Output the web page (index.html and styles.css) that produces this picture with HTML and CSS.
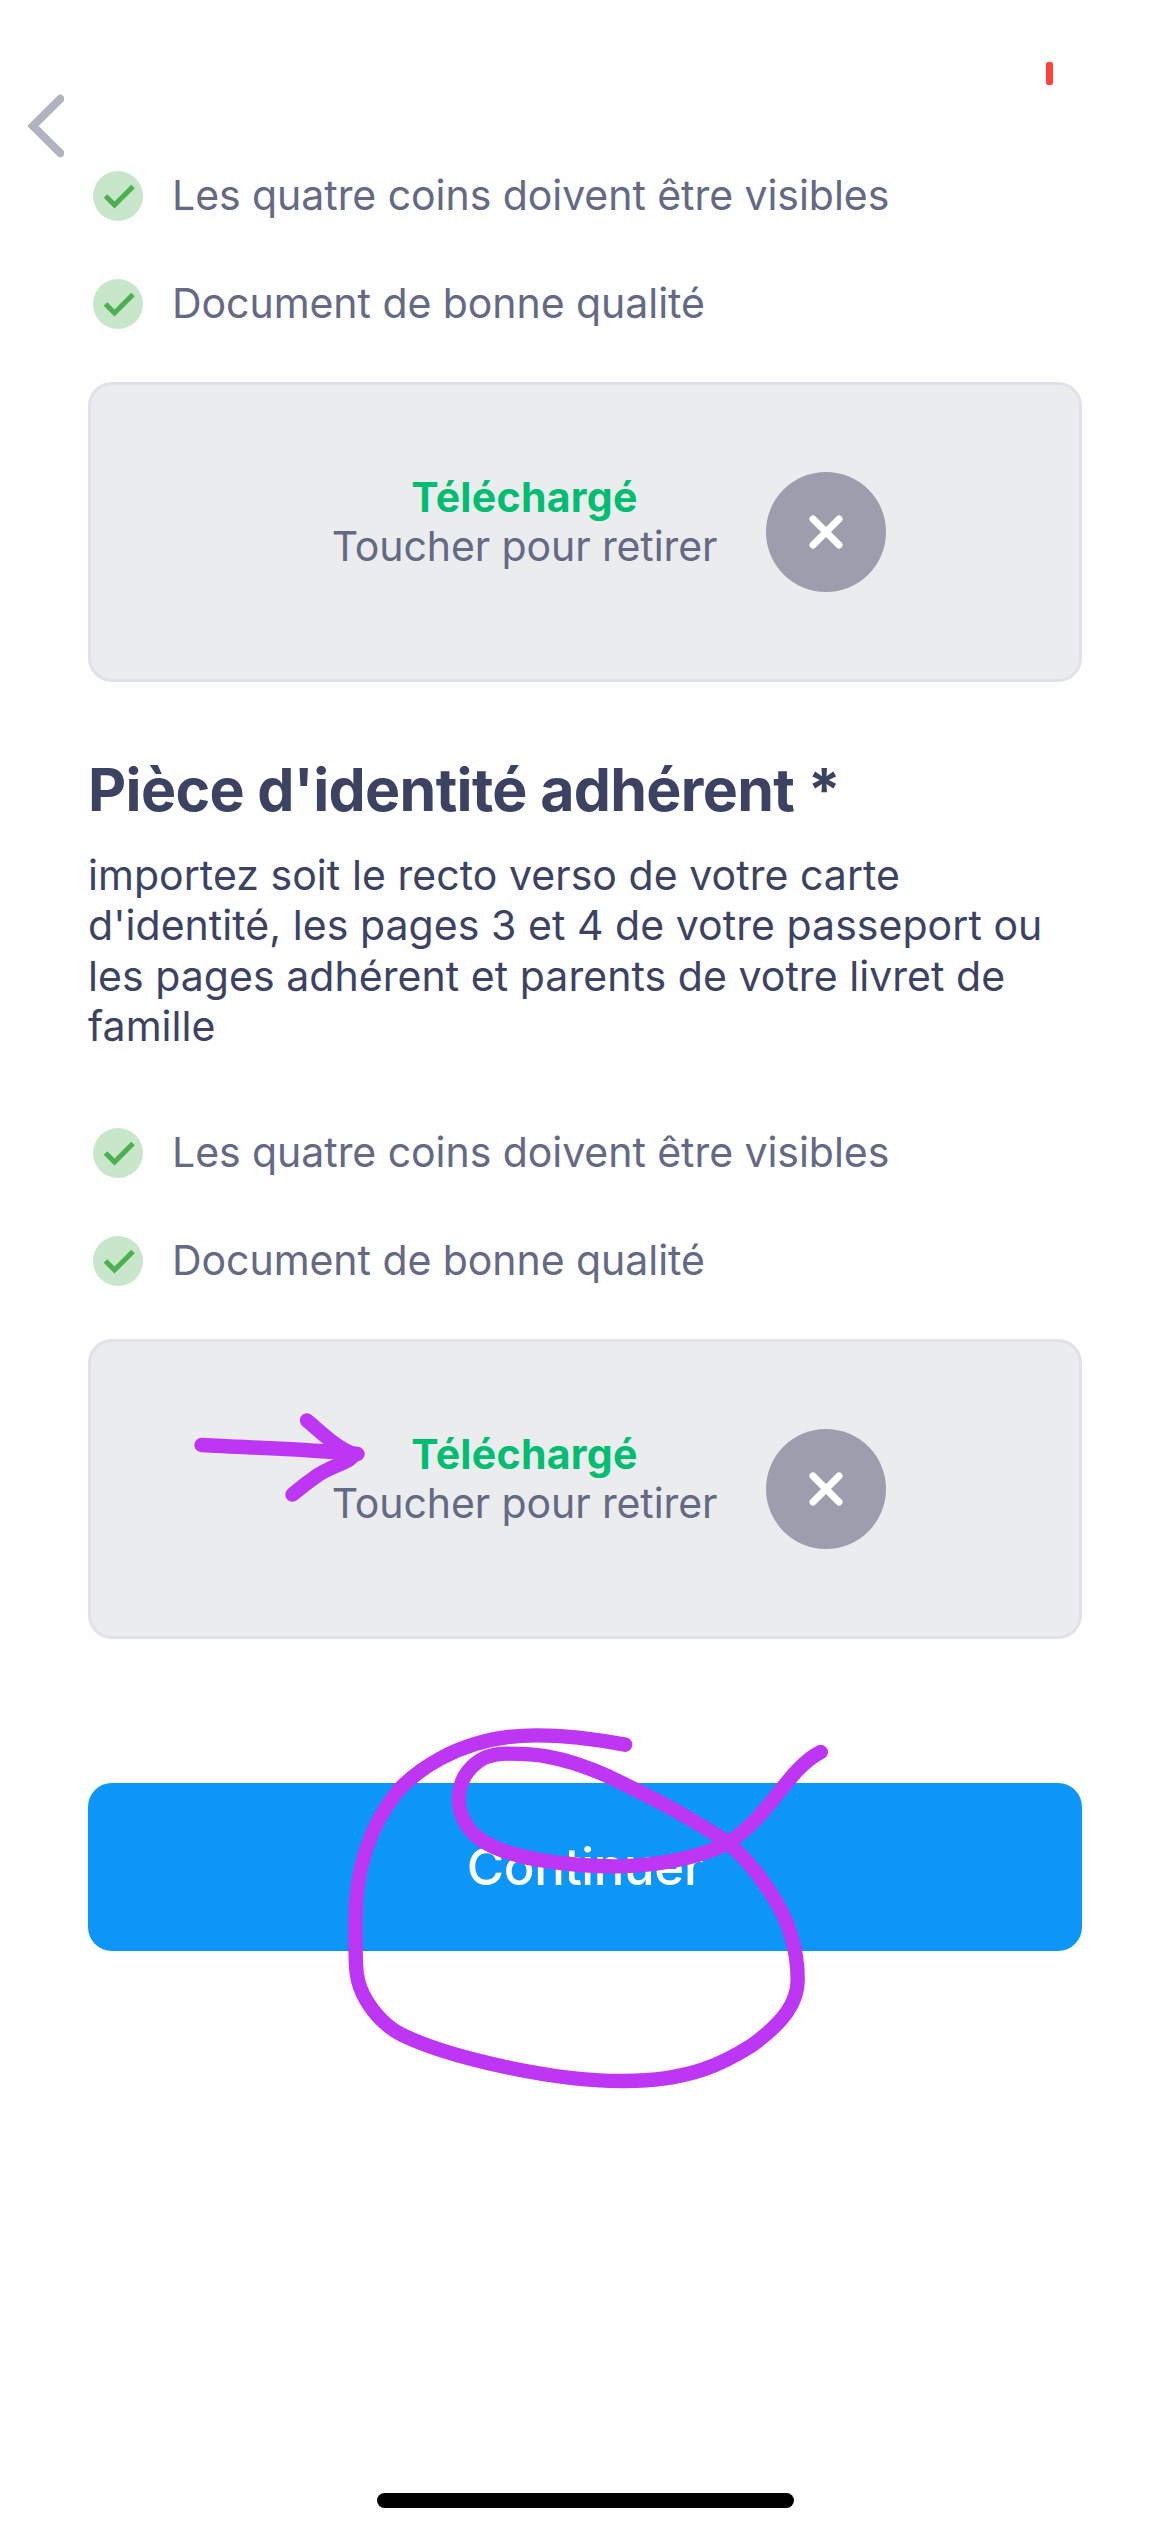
FILE: index.html
```html
<!DOCTYPE html>
<html lang="fr">
<head>
    <meta charset="UTF-8">
    <meta name="viewport" content="width=device-width, initial-scale=1.0">
    <title>Pièces justificatives</title>
    <link rel="stylesheet" href="styles.css">
</head>
<body>
    <!-- Back button and recording mark, above the scrolled content -->
    <button class="back-btn" aria-label="Retour">
        <svg width="36" height="64" viewBox="0 0 36 64"><path d="M32.3 4.8L5 32l27.3 27.2"/></svg>
    </button>
    <span class="rec-mark"></span>

    <main class="content">
        <ul class="checks">
            <li>
                <svg class="check" viewBox="0 0 50 50"><circle cx="25" cy="25" r="25"/><path d="M12.5 25l9 9L40 15.500"/></svg>
                <span class="check-text">Les quatre coins doivent être visibles</span>
            </li>
            <li>
                <svg class="check" viewBox="0 0 50 50"><circle cx="25" cy="25" r="25"/><path d="M12.5 25l9 9L40 15.500"/></svg>
                <span class="check-text">Document de bonne qualité</span>
            </li>
        </ul>

        <div class="upload">
            <div class="upload-text">
                <strong>Téléchargé</strong>
                <span>Toucher pour retirer</span>
            </div>
            <button class="remove-btn" aria-label="Retirer">
                <svg width="34" height="34" viewBox="0 0 34 34"><path d="M4 4l26 26M30 4L4 30"/></svg>
            </button>
        </div>

        <h2>Pièce d'identité adhérent *</h2>
        <p class="intro">importez soit le recto verso de votre carte d'identité, les pages 3 et 4 de votre passeport ou les pages adhérent et parents de votre livret de famille</p>

        <ul class="checks">
            <li>
                <svg class="check" viewBox="0 0 50 50"><circle cx="25" cy="25" r="25"/><path d="M12.5 25l9 9L40 15.500"/></svg>
                <span class="check-text">Les quatre coins doivent être visibles</span>
            </li>
            <li>
                <svg class="check" viewBox="0 0 50 50"><circle cx="25" cy="25" r="25"/><path d="M12.5 25l9 9L40 15.500"/></svg>
                <span class="check-text">Document de bonne qualité</span>
            </li>
        </ul>

        <div class="upload">
            <div class="upload-text">
                <strong>Téléchargé</strong>
                <span>Toucher pour retirer</span>
            </div>
            <button class="remove-btn" aria-label="Retirer">
                <svg width="34" height="34" viewBox="0 0 34 34"><path d="M4 4l26 26M30 4L4 30"/></svg>
            </button>
        </div>

        <button class="continue-btn">Continuer</button>
    </main>

    <!-- Hand-drawn marks -->
    <svg class="drawing" viewBox="0 0 1170 2532">
        <path d="M201.500 1445C255 1448 305 1449 357.500 1454"/>
        <path d="M307 1420.500C323 1434 338 1449 354 1454C350 1463 335 1464 318 1475Q305 1484 292.500 1494.500"/>
        <path class="loop" transform="translate(330 1700) scale(.3444 .33333)" d="M857 134C770 117 690 106 600 106C360 106 230 235 195 275C110 385 75 520 74 650C74 800 70 840 105 900C130 945 170 985 210 1005C340 1070 640 1144 850 1143C1050 1144 1150 1085 1225 1036C1320 965 1358 905 1358 840C1358 740 1325 650 1280 580C1240 515 1190 455 1140 418C1020 335 900 275 810 230C660 160 580 161 510 161C430 161 374 220 374 300C374 340 395 390 440 420C520 478 700 499 830 499C1000 497 1110 455 1160 425C1280 345 1330 205 1425 156"/>
    </svg>

    <div class="home-bar"></div>
</body>
</html>
```
FILE: styles.css
```css
* { margin: 0; padding: 0; box-sizing: border-box; }
body {
    font-family: Inter, "Liberation Sans", sans-serif;
    font-size: 41px;
    color: #3c4262;
    background-color: #fefefe;
    height: 2532px;
    position: relative;
    overflow: hidden;
}
button { border: none; background: none; font-family: inherit; cursor: pointer; }
svg { display: block; }

.back-btn { position: absolute; left: 28px; top: 94px; }
.back-btn path { fill: none; stroke: #b0b4c1; stroke-width: 8; stroke-linecap: round; }
.rec-mark {
    position: absolute; left: 1046px; top: 62px;
    width: 7px; height: 23px; border-radius: 2px; background-color: #ff453a;
}

.content { padding: 142px 88px 0; }

/* Requirements */
.checks { list-style: none; }
.checks li { display: flex; align-items: center; height: 108px; padding-left: 5px; gap: 29px; }
.check { width: 50px; height: 50px; }
.check circle { fill: #c8e6c9; }
.check path { fill: none; stroke: #4caf50; stroke-width: 5; }
.check-text { padding-bottom: 2px; color: #646984; letter-spacing: -0.05px; }

/* Upload box */
.upload {
    display: flex;
    justify-content: center;
    align-items: center;
    gap: 49px;
    height: 300px;
    margin-top: 24px;
    padding-left: 48px;
    background-color: #ebecee;
    border: 3px solid #e0e1ea;
    border-radius: 24px;
}
.upload-text { display: flex; flex-direction: column; margin-bottom: 20px; line-height: 49px; text-align: center; color: #646984; letter-spacing: -0.1px; }
.upload-text strong { color: #00bd71; letter-spacing: 0.3px; }
.remove-btn {
    display: flex; justify-content: center; align-items: center;
    width: 120px; height: 120px; border-radius: 50%; background-color: #9c9eae;
}
.remove-btn path { stroke: #fff; stroke-width: 7; stroke-linecap: round; }

h2 { margin-top: 72px; font-size: 59px; line-height: 72px; letter-spacing: -0.65px; }
.intro { margin: 24px 0 48px; line-height: 50.25px; letter-spacing: 0.05px; }

.continue-btn {
    display: block;
    width: 100%;
    height: 168px;
    margin-top: 144px;
    padding-bottom: 2px;
    border-radius: 24px;
    background-color: #0b96f8;
    color: #fff;
    font-size: 51px;
    font-weight: 500;
    letter-spacing: -0.4px;
}

.drawing { position: absolute; left: 0; top: 0; width: 1170px; height: 2532px; pointer-events: none; }
.drawing path { fill: none; stroke: #bc36f4; stroke-width: 14.4; stroke-linecap: round; stroke-linejoin: round; }
.drawing .loop { vector-effect: non-scaling-stroke; }

.home-bar {
    position: absolute; left: 377px; bottom: 24px;
    width: 417px; height: 15px; border-radius: 8px; background-color: #000;
}
```
